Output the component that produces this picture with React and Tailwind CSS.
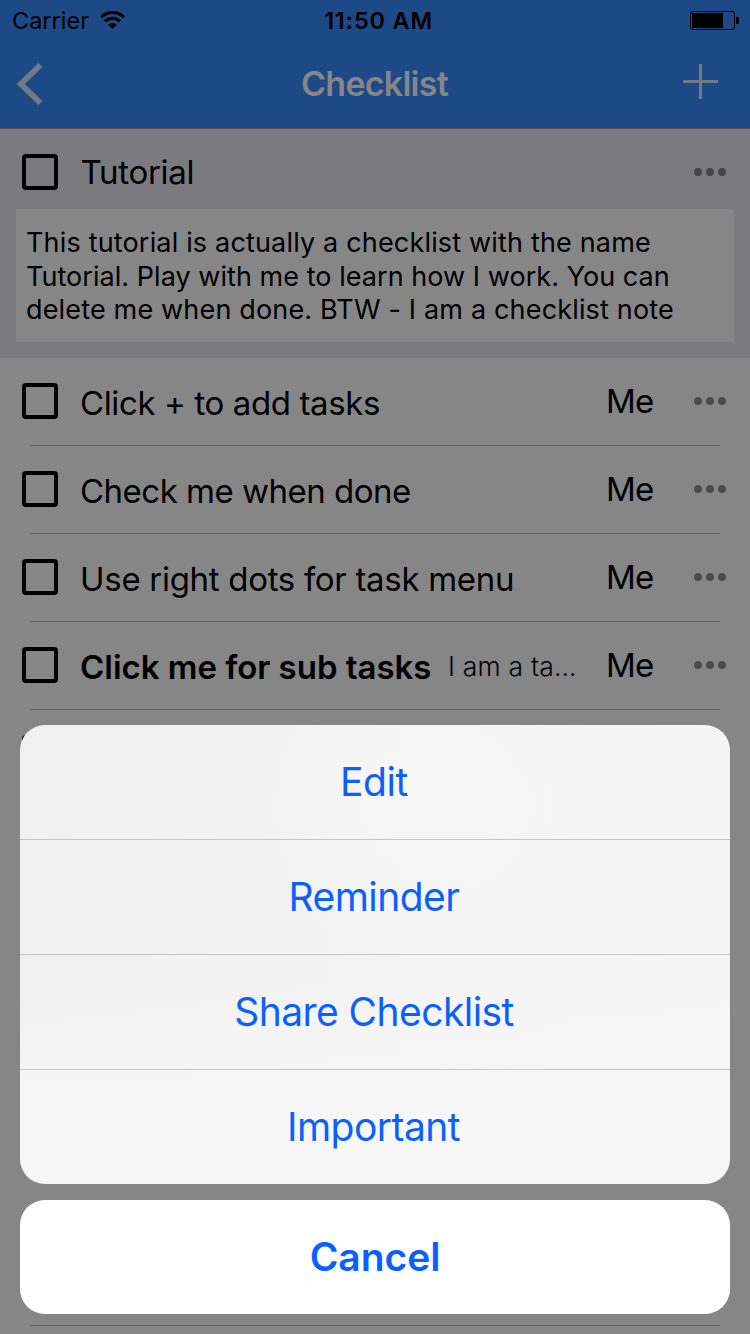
function Wifi() {
  return (
    <svg className="ml-[11px] h-[18px] w-[25px]" viewBox="0 0 25 18" fill="none" stroke="#000" strokeWidth="3">
      <path d="M1.1 6.2A16.2 16.2 0 0 1 23.9 6.2" strokeWidth="2.9" />
      <path d="M5 10.3A10.6 10.6 0 0 1 20 10.3" strokeWidth="2.9" />
      <path d="M12.5 18 8.2 13.7A6.1 6.1 0 0 1 16.8 13.7Z" fill="#000" stroke="none" />
    </svg>
  );
}

function Battery() {
  return (
    <svg className="h-[19px] w-[49px]" viewBox="0 0 49 19">
      <rect x="0.5" y="0.5" width="44" height="18" rx="2.5" fill="none" stroke="#000" />
      <rect x="2" y="2" width="31" height="15" rx="0.8" fill="#000" />
      <path d="M46 6h1.5a1.5 1.5 0 0 1 1.5 1.5v4a1.5 1.5 0 0 1-1.5 1.5H46Z" fill="#000" />
    </svg>
  );
}

function Dots({ light }) {
  return (
    <svg className={light ? "h-2 w-8 text-[#4b4b4b]" : "h-2 w-8 text-[#454544]"} viewBox="0 0 32 8" fill="currentColor">
      <circle cx="4" cy="4" r="4" />
      <circle cx="16" cy="4" r="4" />
      <circle cx="28" cy="4" r="4" />
    </svg>
  );
}

function Checkbox() {
  return <div className="size-9 shrink-0 rounded-[4px] border-4 border-black" />;
}

const tasks = [
  { label: "Click + to add tasks", style: "tracking-[-0.381px]" },
  { label: "Check me when done", style: "tracking-[-0.503px]" },
  { label: "Use right dots for task menu", style: "tracking-[-0.3px]" },
  { label: "Click me for sub tasks", style: "font-semibold tracking-[-0.03px]", note: "I am a ta…" },
  { label: "" },
];
const emptyRows = [0, 1, 2, 3, 4, 5];

const actions = [
  { label: "Edit", style: "pr-[2px] tracking-[-0.4px]" },
  { label: "Reminder", style: "pr-[2px] tracking-[-0.55px]" },
  { label: "Share Checklist", style: "pr-[2px] tracking-[-0.56px]" },
  { label: "Important", style: "pr-[3px] tracking-[-0.56px]" },
];

function TaskRow({ task }) {
  return (
    <div className="flex h-[88px] flex-col">
      <div className="flex h-[87px] items-center pr-6 pb-px pl-[22px]">
        <Checkbox />
        <div className="flex flex-1 items-center pl-[22px]">
          <span className={"pt-1 text-[33px] leading-10 whitespace-nowrap " + (task.style || "")}>{task.label}</span>
          {task.note && (
            <span className="ml-[16.5px] pt-[2px] text-[26.5px] leading-10 font-light tracking-[0.22px] whitespace-nowrap">
              {task.note}
            </span>
          )}
        </div>
        {task.label && (
          <>
            <span className="w-[88px] text-[33px] leading-10 tracking-[-0.8px]">Me</span>
            <Dots light />
          </>
        )}
      </div>
      <div className="mx-[30px] h-px bg-[#646464]" />
    </div>
  );
}

export default function App() {
  return (
    <div className="relative flex h-[1334px] w-[750px] flex-col overflow-hidden bg-[#868686] font-['Inter','Liberation_Sans',sans-serif] text-black">
      <header className="flex h-[129px] shrink-0 flex-col border-b border-[#505156] bg-[#1d4986]">
        <div className="grid h-10 grid-cols-3 items-center">
          <div className="flex items-center pl-3">
            <span className="pt-[2px] text-[23.5px] leading-[38px]">Carrier</span>
            <Wifi />
          </div>
          <span className="pt-[2px] pl-[7px] text-center text-[23.5px] leading-[38px] font-semibold tracking-[0.8px]">11:50 AM</span>
          <div className="flex justify-end pr-[11px]">
            <Battery />
          </div>
        </div>
        <div className="grid h-[88px] grid-cols-[1fr_auto_1fr] items-center pr-8 pl-4 text-[#707a87]">
          <svg className="h-[44px] w-[35px]" viewBox="0 0 35 44" fill="none" stroke="currentColor" strokeWidth="5.8">
            <path d="M24.3 3 4.8 22 24.3 41" />
          </svg>
          <h1 className="pl-[15px] text-[34px] leading-10 font-semibold tracking-[-0.751px] text-[#868686]">Checklist</h1>
          <svg className="mb-[5px] size-[35px] justify-self-end" viewBox="0 0 35 35" fill="currentColor">
            <path d="M16 0h3v16h16v3H19v16h-3V19H0v-3h16Z" />
          </svg>
        </div>
      </header>

      <section className="h-[229px] shrink-0 bg-[#7b7a7f] px-4">
        <div className="flex h-20 items-center pt-[6px] pr-2 pl-[6px]">
          <Checkbox />
          <span className="flex-1 pl-[22.5px] text-[33px] leading-10 tracking-[-0.3px]">Tutorial</span>
          <Dots />
        </div>
        <div className="flex h-[133px] flex-col bg-[#868686] pt-[17px] pl-[10px] text-[27px] leading-[33.5px] whitespace-nowrap">
          <span className="tracking-[0.171px]">This tutorial is actually a checklist with the name</span>
          <span className="tracking-[0.045px]">Tutorial. Play with me to learn how I work. You can</span>
          <span className="tracking-[0.166px]">delete me when done. BTW - I am a checklist note</span>
        </div>
      </section>

      <main className="flex flex-col">
        {tasks.map((task) => (
          <TaskRow key={task.label} task={task} />
        ))}
        {emptyRows.map((row) => (
          <div key={row} className="mx-[30px] h-[88px] shrink-0 border-b border-[#646464]" />
        ))}
      </main>

      <div className="absolute inset-x-5 bottom-5 flex flex-col gap-4 text-[39px] text-[#0a60ff]">
        <div className="flex h-[459px] flex-col overflow-hidden rounded-[25px] bg-[linear-gradient(to_bottom,transparent_55%,#f7f7f7_85%),radial-gradient(ellipse_at_58%_18%,#f7f7f7_0%,transparent_30%),linear-gradient(to_right,#f0f0f0,#f2f2f2_40%,#f4f4f4_60%,#f5f5f5)]">
          {actions.map((action) => (
            <button
              key={action.label}
              className={"h-[115px] shrink-0 border-b border-[#c6c6c6] leading-[114px] last:h-[114px] last:border-b-0 " + action.style}
            >
              {action.label}
            </button>
          ))}
        </div>
        <button className="h-[114px] rounded-[25px] bg-white leading-[114px] font-semibold tracking-[-0.05px]">Cancel</button>
      </div>
    </div>
  );
}
